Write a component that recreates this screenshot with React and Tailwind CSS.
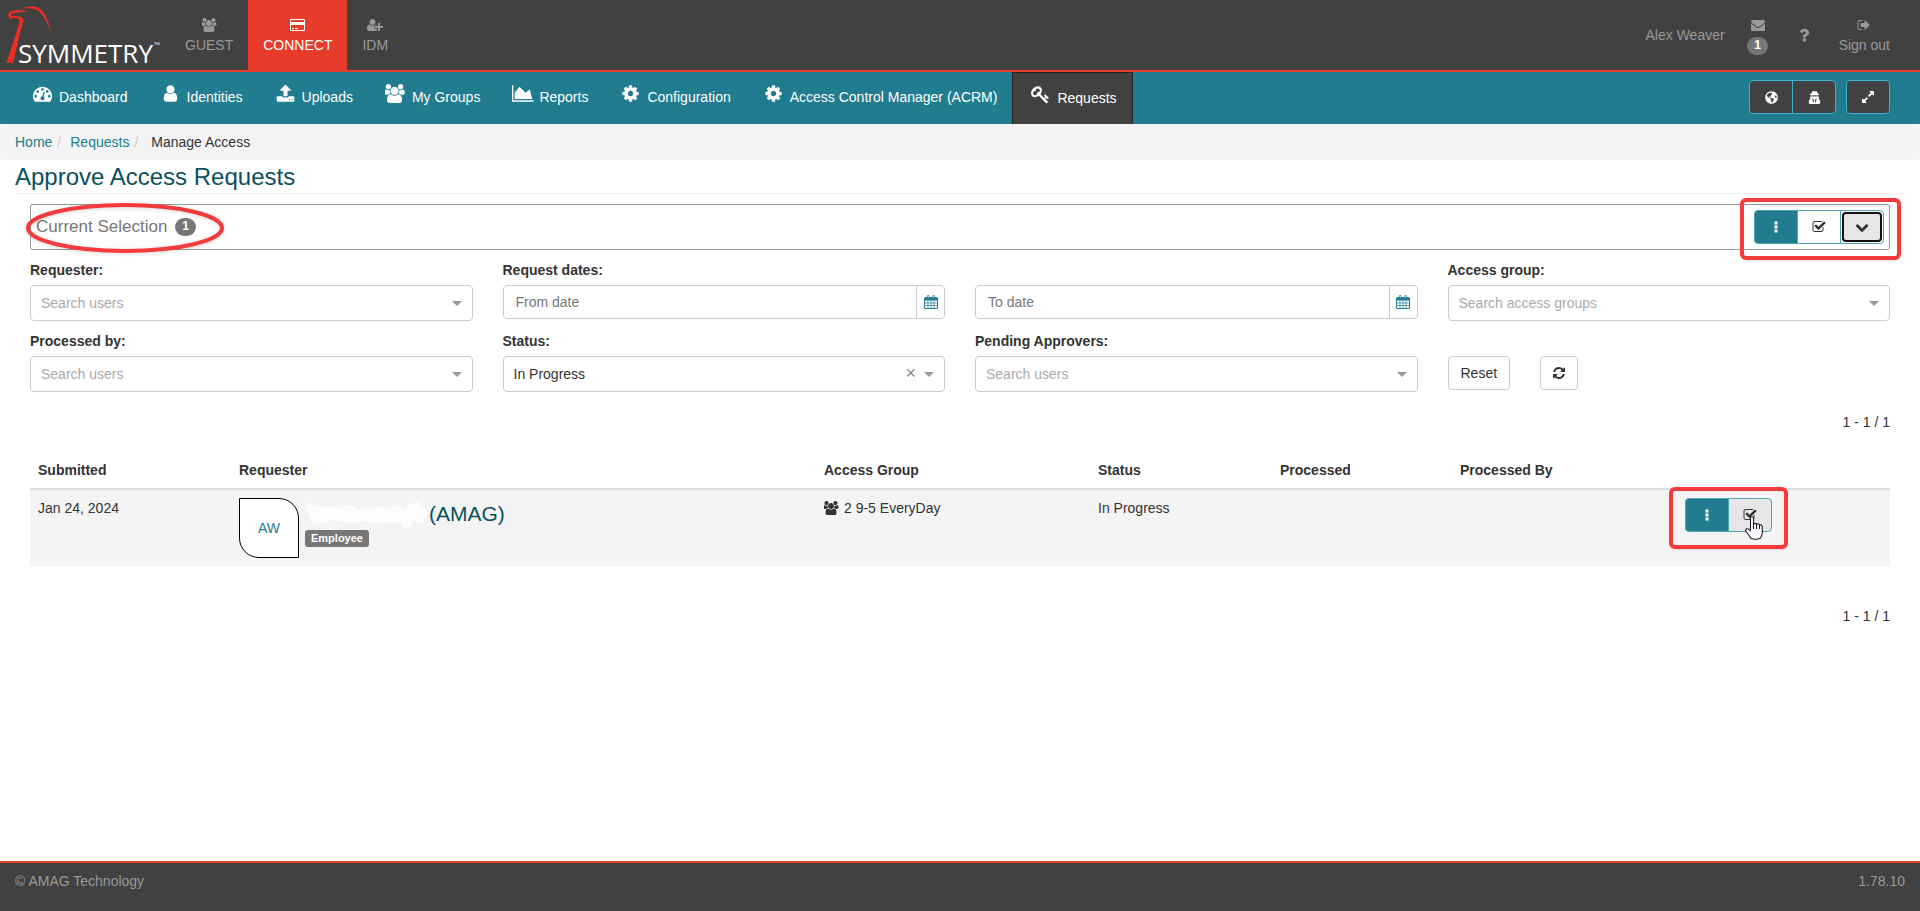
import React from "react";
import { FaGlobeAmericas, FaUserSecret } from "react-icons/fa";

const ICONS = {
  users: [1920, "M529 896q-162 5-265 128h-134q-82 0-138-40.5t-56-118.5q0-353 124-353 6 0 43.5 21t97.5 42.5 119 21.5q67 0 133-23-5 37-5 66 0 139 81 256zm1071 637q0 120-73 189.5t-194 69.5h-874q-121 0-194-69.5t-73-189.5q0-53 3.5-103.5t14-109 26.5-108.5 43-97.5 62-81 85.5-53.5 111.5-20q10 0 43 21.5t73 48 107 48 135 21.5 135-21.5 107-48 73-48 43-21.5q61 0 111.5 20t85.5 53.5 62 81 43 97.5 26.5 108.5 14 109 3.5 103.5zm-1024-1277q0 106-75 181t-181 75-181-75-75-181 75-181 181-75 181 75 75 181zm704 384q0 159-112.5 271.5t-271.5 112.5-271.5-112.5-112.5-271.5 112.5-271.5 271.5-112.5 271.5 112.5 112.5 271.5zm576 225q0 78-56 118.5t-138 40.5h-134q-103-123-265-128 81-117 81-256 0-29-5-66 66 23 133 23 59 0 119-21.5t97.5-42.5 43.5-21q124 0 124 353zm-128-609q0 106-75 181t-181 75-181-75-75-181 75-181 181-75 181 75 75 181z"],
  gauge: [1792, "M384 1152q0-53-37.5-90.5t-90.5-37.5-90.5 37.5-37.5 90.5 37.5 90.5 90.5 37.5 90.5-37.5 37.5-90.5zm192-448q0-53-37.5-90.5t-90.5-37.5-90.5 37.5-37.5 90.5 37.5 90.5 90.5 37.5 90.5-37.5 37.5-90.5zm428 481l101-382q6-26-7.5-48.5t-38.5-29.5-48 6.5-30 39.5l-101 382q-60 5-107 43.5t-63 98.5q-20 77 20 146t117 89 146-20 89-117q16-60-6-117t-72-91zm660-33q0-53-37.5-90.5t-90.5-37.5-90.5 37.5-37.5 90.5 37.5 90.5 90.5 37.5 90.5-37.5 37.5-90.5zm-640-640q0-53-37.5-90.5t-90.5-37.5-90.5 37.5-37.5 90.5 37.5 90.5 90.5 37.5 90.5-37.5 37.5-90.5zm448 192q0-53-37.5-90.5t-90.5-37.5-90.5 37.5-37.5 90.5 37.5 90.5 90.5 37.5 90.5-37.5 37.5-90.5zm320 448q0 261-141 483-19 29-54 29h-1402q-35 0-54-29-141-221-141-483 0-182 71-348t191-286 286-191 348-71 348 71 286 191 191 286 71 348z"],
  cog: [1792, "M1152 896q0-106-75-181t-181-75-181 75-75 181 75 181 181 75 181-75 75-181zm512-109v222q0 12-8 23t-20 13l-185 28q-19 54-39 91 35 50 107 138 10 12 10 25t-9 23q-27 37-99 108t-94 71q-12 0-26-9l-138-108q-44 23-91 38-16 136-29 186-7 28-36 28h-222q-14 0-24.5-8.5t-11.5-21.5l-28-184q-49-16-90-37l-141 107q-10 9-25 9-14 0-25-11-126-114-165-168-7-10-7-23 0-12 8-23 15-21 51-66.5t54-70.5q-27-50-41-99l-183-27q-13-2-21-12.5t-8-23.5v-222q0-12 8-23t19-13l186-28q14-46 39-92-40-57-107-138-10-12-10-24 0-10 9-23 26-36 98.5-107.5t94.5-71.5q13 0 26 10l138 107q44-23 91-38 16-136 29-186 7-28 36-28h222q14 0 24.5 8.5t11.5 21.5l28 184q49 16 90 37l142-107q9-9 24-9 13 0 25 10 129 119 165 170 7 8 7 22 0 12-8 23-15 21-51 66.5t-54 70.5q26 50 41 98l183 28q13 2 21 12.5t8 23.5z"],
  upload: [1792, "M1344 1472q0-26-19-45t-45-19-45 19-19 45 19 45 45 19 45-19 19-45zm256 0q0-26-19-45t-45-19-45 19-19 45 19 45 45 19 45-19 19-45zm128-224v320q0 40-28 68t-68 28h-1472q-40 0-68-28t-28-68v-320q0-40 28-68t68-28h427q21 56 70.5 92t110.5 36h256q61 0 110.5-36t70.5-92h427q40 0 68 28t28 68zm-325-648q-17 40-59 40h-256v448q0 26-19 45t-45 19h-256q-26 0-45-19t-19-45v-448h-256q-42 0-59-40-17-39 14-69l448-448q18-19 45-19t45 19l448 448q31 30 14 69z"],
  user: [1792, "M1536 1399q0 109-62.5 187t-150.5 78h-854q-88 0-150.5-78t-62.5-187q0-85 8.5-160.5t31.5-152 58.5-131 94-89 134.5-34.5q131 128 313 128t313-128q76 0 134.5 34.5t94 89 58.5 131 31.5 152 8.5 160.5zm-256-887q0 159-112.5 271.5t-271.5 112.5-271.5-112.5-112.5-271.5 112.5-271.5 271.5-112.5 271.5 112.5 112.5 271.5z"],
  chart: [2048, "M2048 1536v128h-2048v-1536h128v1408h1920zm-384-1024l256 896h-1664v-576l448-576 576 576z"],
  key: [1792, "M832 512q0-80-56-136t-136-56-136 56-56 136q0 42 19 83-41-19-83-19-80 0-136 56t-56 136 56 136 136 56 136-56 56-136q0-42-19-83 41 19 83 19 80 0 136-56t56-136zm851 704q0 17-49 66t-66 49q-9 0-28.5-16t-36.5-33-38.5-40-24.5-26l-96 96 220 220q28 28 28 68 0 42-39 81t-81 39q-40 0-68-28l-671-671q-176 131-365 131-163 0-265.5-102.5t-102.5-265.5q0-160 95-313t248-248 313-95q163 0 265.5 102.5t102.5 265.5q0 189-131 365l355 355 96-96q-3-3-26-24.5t-40-38.5-33-36.5-16-28.5q0-17 49-66t66-49q13 0 23 10 6 6 46 44.5t82 79.5 86.5 86 73 78 28.5 41z"],
  envelope: [1792, "M1792 710v794q0 66-47 113t-113 47h-1472q-66 0-113-47t-47-113v-794q44 49 101 87 362 246 497 345 57 42 92.5 65.5t94.5 48 110 24.5h2q51 0 110-24.5t94.5-48 92.5-65.5q170-123 498-345 57-39 100-87zm0-294q0 79-49 151t-122 123q-376 261-468 325-10 7-42.5 31t-54 38.5-52 32.5-57.5 27-50 9h-2q-23 0-50-9t-57.5-27-52-32.5-54-38.5-42.5-31q-91-64-262-182.5t-205-142.5q-62-42-117-115.5t-55-136.5q0-78 41.5-130t118.5-52h1472q65 0 112.5 47t47.5 113z"],
  card: [1920, "M1760 128q66 0 113 47t47 113v1216q0 66-47 113t-113 47h-1600q-66 0-113-47t-47-113v-1216q0-66 47-113t113-47h1600zm-1600 128q-13 0-22.5 9.5t-9.5 22.5v224h1664v-224q0-13-9.5-22.5t-22.5-9.5h-1600zm1600 1280q13 0 22.5-9.5t9.5-22.5v-608h-1664v608q0 13 9.5 22.5t22.5 9.5h1600zm-1504-128v-128h256v128h-256zm384 0v-128h384v128h-384z"],
  userPlus: [2048, "M704 896q-159 0-271.5-112.5t-112.5-271.5 112.5-271.5 271.5-112.5 271.5 112.5 112.5 271.5-112.5 271.5-271.5 112.5zm960 128h352q13 0 22.5 9.5t9.5 22.5v192q0 13-9.5 22.5t-22.5 9.5h-352v352q0 13-9.5 22.5t-22.5 9.5h-192q-13 0-22.5-9.5t-9.5-22.5v-352h-352q-13 0-22.5-9.5t-9.5-22.5v-192q0-13 9.5-22.5t22.5-9.5h352v-352q0-13 9.5-22.5t22.5-9.5h192q13 0 22.5 9.5t9.5 22.5v352zm-736 224q0 52 38 90t90 38h256v238q-68 50-171 50h-874q-121 0-194-69t-73-190q0-53 3.5-103.5t14-109 26.5-108.5 43-97.5 62-81 85.5-53.5 111.5-20q19 0 39 17 79 61 154.5 91.5t164.5 30.5 164.5-30.5 154.5-91.5q20-17 39-17 132 0 217 96h-223q-52 0-90 38t-38 90v192z"],
  question: [1792, "M1088 1256v240q0 16-12 28t-28 12h-240q-16 0-28-12t-12-28v-240q0-16 12-28t28-12h240q16 0 28 12t12 28zm316-600q0 54-15.5 101t-35 76.5-55 59.5-57.5 43.5-61 35.5q-41 23-68.5 65t-27.5 67q0 17-12 32.5t-28 15.5h-240q-15 0-25.5-18.5t-10.5-37.5v-45q0-83 65-156.5t143-108.5q59-27 84-56t25-76q0-42-46.5-74t-107.5-32q-65 0-108 29-35 25-107 115-13 16-31 16-12 0-25-8l-164-125q-13-10-15.5-25t5.5-28q160-266 464-266 80 0 161 31t146 83 106 127.5 41 158.5z"],
  signOut: [1792, "M704 1440q0 4 1 20t.5 26.5-3 23.5-10 19.5-20.5 6.5h-320q-119 0-203.5-84.5t-84.5-203.5v-704q0-119 84.5-203.5t203.5-84.5h320q13 0 22.5 9.5t9.5 22.5q0 4 1 20t.5 26.5-3 23.5-10 19.5-20.5 6.5h-320q-66 0-113 47t-47 113v704q0 66 47 113t113 47h312l11.5 1 11.5 3 8 5.5 7 9 2 13.5zm928-544q0 26-19 45l-544 544q-19 19-45 19t-45-19-19-45v-288h-448q-26 0-45-19t-19-45v-384q0-26 19-45t45-19h448v-288q0-26 19-45t45-19 45 19l544 544q19 19 19 45z"],
  expand: [1792, "M883 1056q0 13-10 23l-332 332 144 144q19 19 19 45t-19 45-45 19h-448q-26 0-45-19t-19-45v-448q0-26 19-45t45-19 45 19l144 144 332-332q10-10 23-10t23 10l114 114q10 10 10 23zm781-864v448q0 26-19 45t-45 19-45-19l-144-144-332 332q-10 10-23 10t-23-10l-114-114q-10-10-10-23t10-23l332-332-144-144q-19-19-19-45t19-45 45-19h448q26 0 45 19t19 45z"],
  dots: [1792, "M704 180h384v384h-384zm0 512h384v384h-384zm0 512h384v384h-384z"],
  check: [1792, "M1472 930v318q0 119-84.5 203.5t-203.5 84.5h-832q-119 0-203.5-84.5t-84.5-203.5v-832q0-119 84.5-203.5t203.5-84.5h832q63 0 117 25 15 7 18 23 3 17-9 29l-49 49q-10 10-23 10-3 0-9-2-23-6-45-6h-832q-66 0-113 47t-47 113v832q0 66 47 113t113 47h832q66 0 113-47t47-113v-254q0-13 9-22l64-64q10-10 23-10 6 0 12 3 20 8 20 29zm231-489l-814 814q-24 24-57 24t-57-24l-430-430q-24-24-24-57t24-57l110-110q24-24 57-24t57 24l263 263 647-647q24-24 57-24t57 24l110 110q24 24 24 57t-24 57z"],
  down: [1792, "M1683 808l-742 741q-19 19-45 19t-45-19l-742-741q-19-19-19-45.5t19-45.5l166-165q19-19 45-19t45 19l531 531 531-531q19-19 45-19t45 19l166 165q19 19 19 45.5t-19 45.5z"],
  refresh: [1792, "M1639 1056q0 5-1 7-64 268-268 434.5t-478 166.5q-146 0-282.5-55t-243.5-157l-129 129q-19 19-45 19t-45-19-19-45v-448q0-26 19-45t45-19h448q26 0 45 19t19 45-19 45l-137 137q71 66 161 102t187 36q134 0 250-65t186-179q11-17 53-117 8-23 30-23h192q13 0 22.5 9.5t9.5 22.5zm25-800v448q0 26-19 45t-45 19h-448q-26 0-45-19t-19-45 19-45l138-138q-148-137-349-137-134 0-250 65t-186 179q-11 17-53 117-8 23-30 23h-199q-13 0-22.5-9.5t-9.5-22.5v-7q65-268 270-434.5t480-166.5q146 0 284 55.5t245 156.5l130-129q19-19 45-19t45 19 19 45z"],
};

function Icon({ name, className = "h-3.5" }) {
  const [width, d] = ICONS[name];
  return (
    <svg viewBox={`0 0 ${width} 1792`} className={`${className} w-auto shrink-0`} fill="currentColor" aria-hidden="true">
      <path d={d} />
    </svg>
  );
}

function Logo() {
  return (
    <svg viewBox="0 0 170 70" className="block h-[70px] w-[170px]" role="img" aria-label="Symmetry">
      <g fill="#ee2e24">
        <path d="M28 11C20 10 12 10 9.500 12C7.500 14 8.500 17.500 11 20C11 17.800 13 17.300 16 18C19 18.600 20 19.500 19.500 21.500C16 35 11 49 6.500 63L13.500 62.500C16 49 19.500 35 23.500 20C24 17.500 19 16.500 16 16C13.500 15.500 12.300 15.800 11.200 16.500C10.300 13.500 14 12.800 18 12.500C22 12.200 25 12 28 11Z" />
        <path d="M21.500 9.500C24 7 29 6 34 6.500C41 7.500 44.500 13 47 19C49 23.500 50 27 51 31.500C48.500 25 45 18.500 41.500 14C38 9.500 32 8 27 8.200C25 8.300 23 8.600 21.500 9.500Z" />
      </g>
      <text x="18" y="63" fontFamily="'Open Sans', sans-serif" fontSize="26" fill="#fff">SYMMETRY</text>
      <text x="154" y="48" fontFamily="'Open Sans', sans-serif" fontSize="8" fill="#ddd">™</text>
    </svg>
  );
}

const apps = [
  { label: "GUEST", icon: "users" },
  { label: "CONNECT", icon: "card", active: true },
  { label: "IDM", icon: "userPlus" },
];

const menu = [
  { label: "Dashboard", icon: "gauge" },
  { label: "Identities", icon: "user" },
  { label: "Uploads", icon: "upload" },
  { label: "My Groups", icon: "users" },
  { label: "Reports", icon: "chart" },
  { label: "Configuration", icon: "cog" },
  { label: "Access Control Manager (ACRM)", icon: "cog" },
];

function Header() {
  return (
    <header className="flex h-18 items-stretch border-b-2 border-[#e73c2c] bg-[#414141] text-[#999]">
      <a href="#home" className="w-[170px]"><Logo /></a>
      <nav className="flex" aria-label="Applications">
        {apps.map((a) => (
          <a key={a.label} href="#app" className={`flex flex-col items-center gap-[3px] px-[15px] pt-[18px] ${a.active ? "bg-[#e73c2c] text-white" : ""}`}>
            <Icon name={a.icon} />
            <span>{a.label}</span>
          </a>
        ))}
      </nav>
      <div className="ml-auto flex pr-[30px]">
        <span className="pt-[25px]">Alex Weaver</span>
        <a href="#messages" className="ml-[22px] flex w-[22px] flex-col items-center gap-[5px] pt-[18px]" aria-label="Messages">
          <Icon name="envelope" />
          <span className="h-[18px] rounded-[10px] bg-[#777] px-[7px] text-xs leading-[17px] font-bold text-white">1</span>
        </a>
        <a href="#help" className="ml-[26px] pt-[26px]" aria-label="Help"><Icon name="question" className="h-[18px]" /></a>
        <a href="#signout" className="ml-[26px] flex flex-col items-center gap-[3px] pt-[18px]">
          <Icon name="signOut" />
          <span>Sign out</span>
        </a>
      </div>
    </header>
  );
}

function MenuIcon({ name }) {
  return (
    <span className="flex w-[25px] shrink-0 justify-center">
      <Icon name={name} className="h-[19px]" />
    </span>
  );
}

function MenuBar() {
  const dark = "flex h-[34px] items-center justify-center border border-[#3cb4cb] bg-[#414141]";
  return (
    <div className="flex h-13 items-stretch bg-[#207c8e] text-white">
      <nav className="flex pl-[15px]" aria-label="Main">
        {menu.map((m) => (
          <a key={m.label} href="#menu" className="flex items-start gap-1 px-[15px] pt-3">
            <MenuIcon name={m.icon} />
            <span className="pt-[3px]">{m.label}</span>
          </a>
        ))}
        <a href="#requests" aria-current="page" className="flex items-start gap-1 border border-b-0 border-[#222] bg-[#414141] px-[15px] pt-3">
          <MenuIcon name="key" />
          <span className="pt-[3px]">Requests</span>
        </a>
      </nav>
      <div className="ml-auto flex items-start pt-2 pr-[30px] text-[13px]">
        <button aria-label="Region" className={`${dark} w-11 rounded-l`}><FaGlobeAmericas /></button>
        <button aria-label="Impersonate" className={`${dark} -ml-px w-11 rounded-r`}><FaUserSecret /></button>
        <button aria-label="Full screen" className={`${dark} ml-2.5 w-11 rounded`}><Icon name="expand" /></button>
      </div>
    </div>
  );
}

function PickerField({ id, label, value, placeholder, clearable }) {
  return (
    <div>
      <label htmlFor={id} className="mb-[5px] block font-bold">{label}</label>
      <div className="relative">
        <select id={id} className={`block h-9 w-full appearance-none rounded border border-[#ccc] bg-white px-2.5 ${value ? "text-[#333]" : "text-[#aaa]"}`}>
          <option>{value || placeholder}</option>
        </select>
        {clearable && <button type="button" aria-label="Clear status" className="absolute top-[7px] right-[29px] text-lg leading-5 text-[#888]">×</button>}
        <svg viewBox="0 0 10 5" className="pointer-events-none absolute top-4 right-[11px] h-[5px] w-2.5" fill="#999" aria-hidden="true"><path d="M0 0H10L5 5Z" /></svg>
      </div>
    </div>
  );
}

function DateField({ id, label, placeholder }) {
  return (
    <div className="flex flex-col">
      {label && <label htmlFor={id} className="mb-[5px] block font-bold">{label}</label>}
      <div className={`flex h-[34px] rounded border border-[#ccc] ${label ? "" : "mt-[25px]"}`}>
        <input id={id} aria-label={placeholder} placeholder={placeholder} className="min-w-0 grow rounded-l px-3 placeholder:text-[#777]" />
        <button type="button" aria-label={`Pick ${placeholder.toLowerCase()}`} className="flex w-7 items-center justify-center border-l border-[#ccc]">
          <svg viewBox="0 0 14 14" className="h-3.5 w-3.5" fill="none" stroke="#207c8e" aria-hidden="true">
            <path d="M1 2.5H13V5H1Z" fill="#207c8e" />
            <path d="M.5 3V13.5H13.5V3" />
            <path d="M1 8H13M1 10.5H13M4 5V13M7 5V13M10 5V13" strokeWidth=".7" />
            <path d="M3.5 .5H5V3H3.5ZM9 .5H10.5V3H9Z" fill="#fff" strokeWidth=".7" />
          </svg>
        </button>
      </div>
    </div>
  );
}

const segment = "flex h-[34px] w-11 items-center justify-center border border-[#4fa3b3]";

function Results() {
  const head = "px-2 pt-2 pb-2 text-left font-bold";
  return (
    <table className="mt-[18px] w-full table-fixed border-collapse">
      <thead>
        <tr className="h-[39px] border-b-2 border-[#ddd] align-bottom">
          <th className={`${head} w-[201px]`}>Submitted</th>
          <th className={head}>Requester</th>
          <th className={`${head} w-[274px]`}>Access Group</th>
          <th className={`${head} w-[182px]`}>Status</th>
          <th className={`${head} w-[180px]`}>Processed</th>
          <th className={`${head} w-[225px]`}>Processed By</th>
          <th className="w-[213px]" aria-label="Actions"></th>
        </tr>
      </thead>
      <tbody>
        <tr className="bg-[#f4f4f4] align-top">
          <td className="p-2">Jan 24, 2024</td>
          <td className="p-2">
            <div className="flex">
              <span className="flex size-[60px] items-center justify-center rounded-tr-[20px] rounded-bl-[20px] border border-black bg-white text-[#207c8e]">AW</span>
              <div className="pl-1.5">
                <a href="#requester" className="flex h-8 items-center text-[21px] text-[#0a4f5e]">
                  <svg viewBox="0 0 126 30" className="h-[30px] w-[124px]" fill="#fdfdfd" aria-hidden="true">
                    <path d="M0 5L5 4L8 7L15 5L20 8L30 7L34 9L42 6L50 7L54 10L64 8L70 10L78 7L86 10L92 6L97 7L100 10L108 5L115 3L119 6L122 10L126 14L122 17L120 24L115 25L110 22L106 30L100 28L98 23L70 24L60 22L48 24L38 23L28 21L20 24L8 25L4 15Z" />
                  </svg>
                  (AMAG)
                </a>
                <span className="block h-[17px] w-fit rounded-[3px] bg-[#777] px-1.5 text-[11px] leading-[17px] font-bold text-white">Employee</span>
              </div>
            </div>
          </td>
          <td className="p-2"><span className="flex items-center gap-[5px]"><Icon name="users" />2 9-5 EveryDay</span></td>
          <td className="p-2">In Progress</td>
          <td className="p-2"></td>
          <td className="p-2"></td>
          <td className="p-2">
            <div className="relative flex w-fit">
              <button aria-label="Request actions" className={`${segment} rounded-l bg-[#207c8e] text-white`}><Icon name="dots" /></button>
              <button aria-label="Select request" className={`${segment} -ml-px rounded-r bg-[#e6e6e6]`}><Icon name="check" /></button>
              <span className="pointer-events-none absolute -inset-x-4 -top-[11px] -bottom-[17px] rounded-md border-4 border-[#f33b3b] shadow-sm" />
              <svg viewBox="0 0 18 24" className="pointer-events-none absolute top-[18px] left-[60px] h-6 w-[18px]" aria-hidden="true">
                <path d="M5.5 14V2Q5.5 .7 7 .7T8.5 2V8Q10 6.800 11.500 8.200Q13 7.200 14.500 9Q16.500 8.500 17.300 10.500V17Q17 20 15 22.500Q10 24 6 22.500Q4 19 1 15.500Q.300 13.500 1.500 12.800Q3 12.200 5.500 14.500ZM8.500 8V13M11.500 8.500V13M14.500 9.500V13" fill="#fff" stroke="#1b1b2b" strokeWidth="1.1" />
              </svg>
            </div>
          </td>
        </tr>
      </tbody>
    </table>
  );
}

export default function App() {
  return (
    <div className="flex min-h-screen flex-col bg-white font-['Liberation_Sans',Arial,sans-serif] text-sm leading-5 text-[#333]">
      <Header />
      <MenuBar />
      <nav aria-label="Breadcrumb" className="flex h-9 items-center rounded bg-[#f4f4f4] px-[15px]">
        <a href="#home" className="text-[#207c8e]">Home</a>
        <span className="px-[5px] text-[#ccc]">/</span>
        <a href="#requests" className="pl-1 text-[#207c8e]">Requests</a>
        <span className="px-[5px] text-[#ccc]">/</span>
        <span className="pl-2">Manage Access</span>
      </nav>
      <main className="grow px-[15px]">
        <h1 className="h-[34px] border-b border-[#eee] text-2xl leading-[34px] text-[#0a4f5e]">Approve Access Requests</h1>
        <div className="px-[15px] pt-2.5">
          <section className="relative flex h-[46px] items-center justify-between rounded-[3px] border border-[#999] px-[5px]">
            <h2 className="flex items-center gap-2 text-[17px] text-[#777]">
              Current Selection
              <span className="h-[18px] rounded-[10px] bg-[#777] px-[7px] text-xs leading-4 font-bold text-white">1</span>
            </h2>
            <div className="flex">
              <button aria-label="Selection actions" className={`${segment} rounded-l bg-[#207c8e] text-white`}><Icon name="dots" /></button>
              <button aria-label="Select all" className={`${segment} -ml-px bg-white`}><Icon name="check" /></button>
              <div className={`${segment} -ml-px rounded-r`}>
                <button aria-label="Show filters" className="flex h-[30px] w-10 items-center justify-center rounded border-2 border-[#101010] bg-[#e6e6e6]"><Icon name="down" /></button>
              </div>
            </div>
            <svg viewBox="0 0 200 52" className="pointer-events-none absolute -top-[3px] -left-[6px] h-[52px] w-[200px] drop-shadow-sm" fill="none" stroke="#f33b3b" strokeWidth="4" aria-hidden="true">
              <ellipse cx="100" cy="26" rx="97" ry="23" />
            </svg>
            <span className="pointer-events-none absolute -top-[7px] -right-3 -bottom-[11px] w-[161px] rounded-md border-4 border-[#f33b3b] shadow-sm" />
          </section>

          <form className="grid grid-cols-4 gap-x-[30px] gap-y-2.5 pt-2.5">
            <PickerField id="requester" label="Requester:" placeholder="Search users" />
            <DateField id="from" label="Request dates:" placeholder="From date" />
            <DateField id="to" placeholder="To date" />
            <PickerField id="group" label="Access group:" placeholder="Search access groups" />
            <PickerField id="processed" label="Processed by:" placeholder="Search users" />
            <PickerField id="status" label="Status:" value="In Progress" clearable />
            <PickerField id="approvers" label="Pending Approvers:" placeholder="Search users" />
            <div className="flex gap-[30px] pt-[25px]">
              <button type="button" className="h-[34px] rounded border border-[#ccc] px-3">Reset</button>
              <button type="button" aria-label="Refresh" className="flex h-[34px] items-center rounded border border-[#ccc] px-[11px]"><Icon name="refresh" /></button>
            </div>
          </form>

          <p className="pt-5 text-right">1 - 1 / 1</p>
          <Results />
          <p className="pt-10 text-right">1 - 1 / 1</p>
        </div>
      </main>
      <footer className="flex h-[50px] justify-between border-t-2 border-[#e73c2c] bg-[#414141] px-[15px] pt-2 text-[#999]">
        <span>© AMAG Technology</span>
        <span>1.78.10</span>
      </footer>
    </div>
  );
}
